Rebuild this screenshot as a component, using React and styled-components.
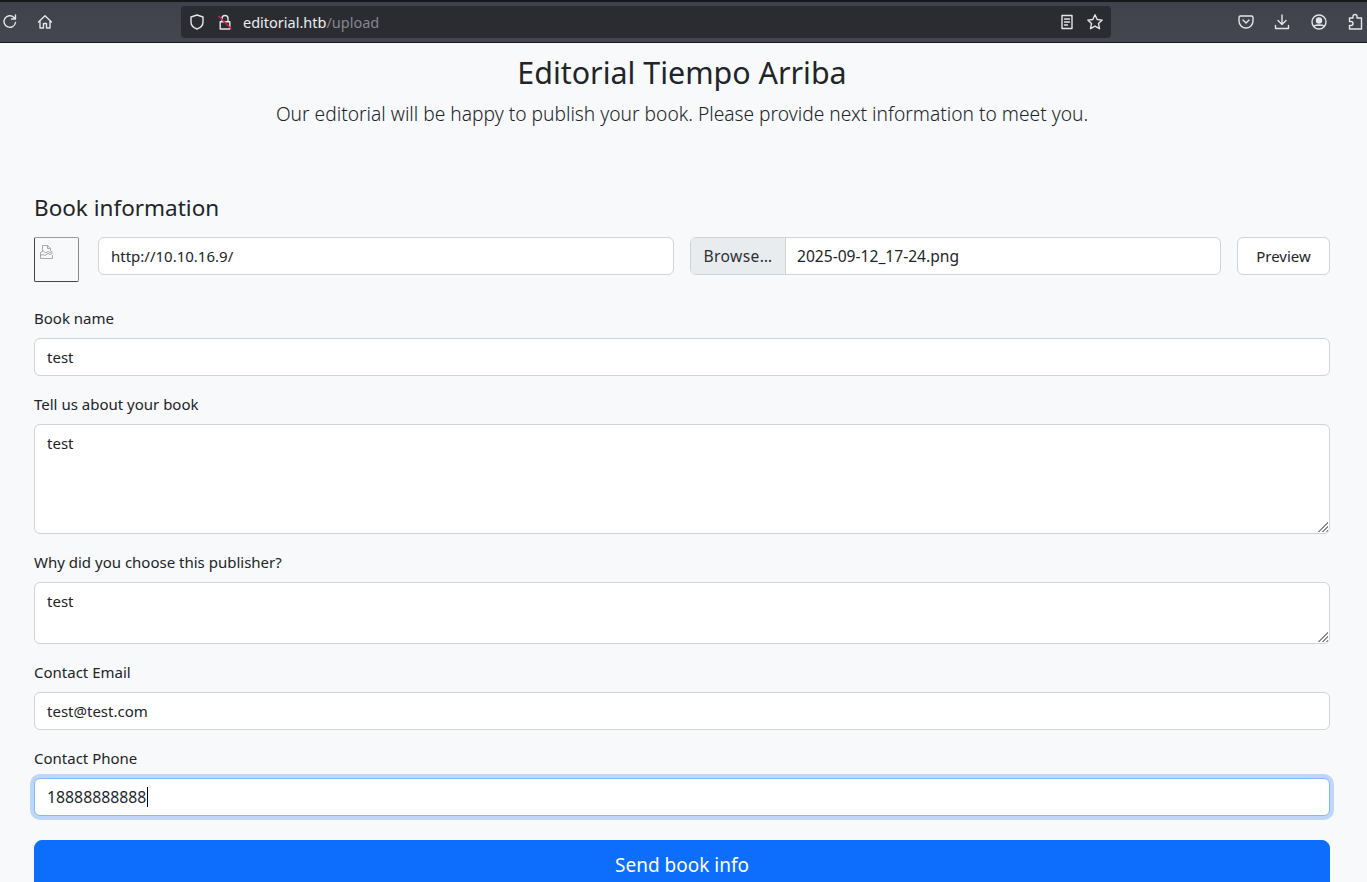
import React from "react";
import styled, { createGlobalStyle } from "styled-components";

const GlobalStyle = createGlobalStyle`
  html, body {
    margin: 0;
    height: 882px;
    overflow: hidden;
    background: #f8f9fa;
  }
  * { box-sizing: border-box; }
`;

const FONT = `"Noto Sans", "Open Sans", sans-serif`;

const Toolbar = styled.header`
  height: 43px;
  display: flex;
  align-items: center;
  background: linear-gradient(#3f424a, #44474f);
  border-top: 2px solid #17181c;
  border-bottom: 1px solid #17181c;
  color: #e4e5e8;
  font-family: ${FONT};
`;
const NavIcon = styled.svg`
  width: 18px;
  height: 18px;
  flex: none;
  fill: none;
  stroke: currentColor;
  stroke-width: 1.4;
  stroke-linecap: round;
  stroke-linejoin: round;
`;
const LeftTools = styled.div`
  width: 181px;
  display: flex;
  align-items: center;
  gap: 17px;
  padding-left: 1px;
`;
const UrlBar = styled.div`
  width: 930px;
  height: 32px;
  margin-top: -1px;
  padding: 0 7px;
  display: flex;
  align-items: center;
  background: #2b2c32;
  border-radius: 4px;
`;
const LockIcon = styled.svg`
  width: 18px;
  height: 18px;
  flex: none;
  margin-left: 10px;
  fill: none;
`;
const UrlText = styled.div`
  margin-left: 9px;
  font-size: 14.5px;
  flex: 1;
  color: #eceded;
`;
const UrlPath = styled.span`
  color: #85868b;
`;
const UrlIcons = styled.div`
  display: flex;
  gap: 10px;
`;
const RightTools = styled.div`
  flex: 1;
  display: flex;
  justify-content: flex-end;
  gap: 18.5px;
  padding-right: 3px;
`;

const Main = styled.main`
  padding: 0 37px 0 34px;
  color: #212529;
  font-family: ${FONT};
`;
const Hero = styled.div`
  text-align: center;
  height: 150px;
  padding-top: 10px;
`;
const Title = styled.h1`
  margin: 0;
  font-size: 30.4px;
  line-height: 40px;
  font-weight: 400;
`;
const Lead = styled.p`
  margin: 7px 0 0;
  font-size: 19.2px;
  line-height: 28px;
  font-weight: 300;
`;
const SectionTitle = styled.h3`
  margin: 0 0 14px;
  font-size: 22.5px;
  line-height: 30px;
  font-weight: 400;
`;
const TopRow = styled.div`
  display: flex;
  align-items: flex-start;
  gap: 16px;
  height: 45px;
  margin-bottom: 30px;
`;
const Thumb = styled.div`
  width: 45px;
  height: 45px;
  margin-right: 3px;
  flex: none;
  border: 1px solid #8a8a8a;
  border-top-color: #9a9a9a;
  border-left-color: #444;
  border-bottom-color: #444;
  border-radius: 2px;
  padding: 4px 0 0 5px;
`;
const controlStyles = `
  display: block;
  width: 100%;
  padding: 6px 12px;
  font-family: ${FONT};
  font-size: 15px;
  line-height: 24px;
  color: #212529;
  background: #fff;
  border: 1px solid #ced4da;
  border-radius: 6px;
  outline: none;
`;
const Input = styled.input`
  ${controlStyles}
  height: 38px;
`;
const UrlInput = styled(Input)`
  width: 576px;
  flex: none;
`;
const TextArea = styled.textarea`
  ${controlStyles}
  height: ${(p) => p.$height}px;
  resize: none;
  background-color: #fff;
  background-image:
    linear-gradient(135deg, #fff 50%, transparent 50%),
    repeating-linear-gradient(135deg, #8b8b8b 0 1px, #fff 1px 2.800px);
  background-size: 11px 11px;
  background-position: right 1px bottom 1px;
  background-repeat: no-repeat;
`;
const FileControl = styled.div`
  width: 531px;
  height: 38px;
  flex: none;
  display: flex;
  align-items: center;
  background: #fff;
  border: 1px solid #ced4da;
  border-radius: 6px;
  overflow: hidden;
  font-size: 15.600px;
`;
const BrowseLabel = styled.div`
  width: 95px;
  height: 100%;
  display: flex;
  align-items: center;
  justify-content: center;
  letter-spacing: 0.4px;
  color: #2b3035;
  background: #e9ecef;
  border-right: 1px solid #ced4da;
`;
const FileName = styled.div`
  padding-left: 11px;
`;
const PreviewButton = styled.button`
  width: 93px;
  height: 38px;
  flex: none;
  font-family: ${FONT};
  font-size: 15px;
  color: #212529;
  background: #fff;
  border: 1px solid #ced4da;
  border-radius: 6px;
`;
const Group = styled.div`
  margin-bottom: ${(p) => p.$gap ?? 22}px;
`;
const Label = styled.label`
  display: block;
  margin-bottom: 14px;
  font-size: 15px;
  height: 12px;
  line-height: 12px;
`;
const FocusedField = styled.div`
  ${controlStyles}
  height: 38px;
  display: flex;
  align-items: center;
  font-size: 15.800px;
  border-color: #86b7fe;
  box-shadow: 0 0 0 4px rgba(13, 110, 253, 0.25);
`;
const Caret = styled.span`
  width: 1px;
  height: 20px;
  margin-left: 1px;
  background: #000;
`;
const SubmitButton = styled.button`
  display: block;
  width: 100%;
  height: 50px;
  padding: 0;
  font-family: ${FONT};
  font-size: 19px;
  color: #fff;
  background: #0d6efd;
  border: 1px solid #0d6efd;
  border-radius: 8px;
`;

const Icon = ({ children, viewBox = "0 0 18 18", ...rest }) => (
  <NavIcon viewBox={viewBox} {...rest}>
    {children}
  </NavIcon>
);

const BrokenImage = () => (
  <svg width="13" height="14" viewBox="0 0 13 14" fill="none" stroke="#a9a9a9" strokeWidth="1">
    <path d="M2.500 6V.5h5l3 3V6M7.500.5v3h3" />
    <path d="M.5 7.500l3-1.500 2 2 2.500-1.500 2 1 2-1v2l-2 1-2-1-3 2-2-1-2.500 1z" />
    <path d="M.5 10v3.500h12V10" />
  </svg>
);

export default function App() {
  return (
    <>
      <GlobalStyle />
      <Toolbar>
        <LeftTools>
          <Icon>
            <path d="M14.500 9.500a5.800 5.800 0 1 1-1.700-5.200l1.700 1.700M14.500 2v4h-4" />
          </Icon>
          <Icon>
            <path d="M2.500 9L9 2.800 15.500 9M4 7.800V15h3.500v-4.500h3V15H14V7.800" />
          </Icon>
        </LeftTools>
        <UrlBar>
          <Icon>
            <path d="M9 2l6 2v5c0 3.500-2.500 5.800-6 7-3.500-1.200-6-3.500-6-7V4z" />
          </Icon>
          <LockIcon viewBox="0 0 18 18">
            <path d="M6 8V5.500a3 3 0 0 1 6 0V8M4.200 8.700h9.600v7.300H4.200z" stroke="#e4e5e8" strokeWidth="1.400" strokeLinejoin="round" />
            <path d="M2.500 3l13 13" stroke="#c9234a" strokeWidth="1.500" />
          </LockIcon>
          <UrlText>
            editorial.htb<UrlPath>/upload</UrlPath>
          </UrlText>
          <UrlIcons>
            <Icon>
              <path d="M4 2.500h10v13H4zM6.500 6h5M6.500 9h5M6.500 12h3" />
            </Icon>
            <Icon>
              <path d="M9 1.800l2.200 4.700 5 .6-3.700 3.500 1 5.100L9 13.200l-4.500 2.500 1-5.100L1.800 7.100l5-.6z" />
            </Icon>
          </UrlIcons>
        </UrlBar>
        <RightTools>
          <Icon>
            <path d="M3.500 3h11A1.500 1.500 0 0 1 16 4.500V8a7 7 0 0 1-14 0V4.500A1.500 1.500 0 0 1 3.500 3zM6 7l3 3 3-3" />
          </Icon>
          <Icon>
            <path d="M9 2v9.500M5 7.500l4 4 4-4M2.500 12.500v3h13v-3" />
          </Icon>
          <Icon>
            <circle cx="9" cy="9" r="7" />
            <circle cx="9" cy="7.500" r="2.500" fill="currentColor" />
            <path d="M4.500 13c1-1.500 8-1.500 9 0" fill="currentColor" />
          </Icon>
          <Icon>
            <path d="M7 3.500a2 2 0 0 1 4 0V5h4.500v11h-12v-3.500H5a2 2 0 0 0 0-4H3.500V5H7z" />
          </Icon>
        </RightTools>
      </Toolbar>
      <Main>
        <Hero>
          <Title>Editorial Tiempo Arriba</Title>
          <Lead>Our editorial will be happy to publish your book. Please provide next information to meet you.</Lead>
        </Hero>
        <SectionTitle>Book information</SectionTitle>
        <TopRow>
          <Thumb>
            <BrokenImage />
          </Thumb>
          <UrlInput readOnly value="http://10.10.16.9/" />
          <FileControl>
            <BrowseLabel>Browse…</BrowseLabel>
            <FileName>2025-09-12_17-24.png</FileName>
          </FileControl>
          <PreviewButton>Preview</PreviewButton>
        </TopRow>
        <Group>
          <Label>Book name</Label>
          <Input readOnly value="test" />
        </Group>
        <Group>
          <Label>Tell us about your book</Label>
          <TextArea $height={110} readOnly value="test" />
        </Group>
        <Group>
          <Label>Why did you choose this publisher?</Label>
          <TextArea $height={62} readOnly value="test" />
        </Group>
        <Group>
          <Label>Contact Email</Label>
          <Input readOnly value="test@test.com" />
        </Group>
        <Group $gap={24}>
          <Label>Contact Phone</Label>
          <FocusedField>
            18888888888
            <Caret />
          </FocusedField>
        </Group>
        <SubmitButton>Send book info</SubmitButton>
      </Main>
    </>
  );
}
